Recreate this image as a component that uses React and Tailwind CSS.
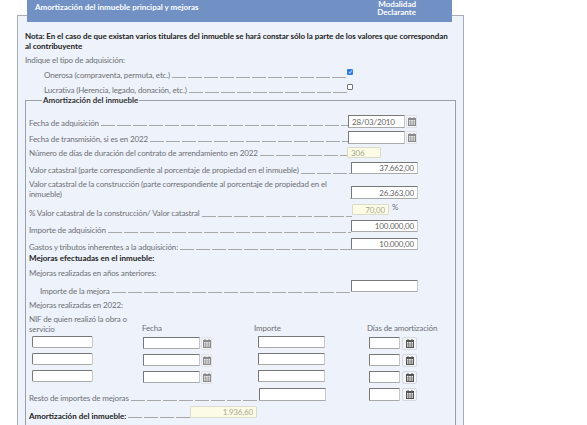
function Cal({ dark, boxed }) {
  const c = dark ? "#555" : "#8a8a8a";
  return (
    <span className={boxed ? "flex h-[13px] w-[15px] shrink-0 items-center justify-center rounded-[2px] border border-[#d5d8de] bg-[#f2f4f8]" : "flex h-[13px] w-[11px] shrink-0 items-center justify-center rounded-[1px] border border-[#dfe2e8] bg-[#f2f4f8]"}>
      <svg width="8" height="9" viewBox="0 0 8 9">
        <rect x="0.5" y="1.5" width="7" height="7" fill="#e8e8e8" stroke={c} />
        <rect x="0" y="1" width="8" height="2" fill={c} />
        <path d="M2 0v2M6 0v2" stroke={c} />
        <path d="M0 5h8M0 7h8M2.7 3v6M5.3 3v6" stroke={c} strokeWidth="0.6" />
      </svg>
    </span>
  );
}

function Field({ className, value, readOnly }) {
  return (
    <input
      readOnly
      value={value || ""}
      className={
        "relative z-[1] box-border block rounded-[1px] border px-[3px] text-right text-[8px] leading-none outline-none " +
        (readOnly
          ? "border-[#d9dcc8] bg-[#fbfbe6] text-[#a8a890] "
          : "border-t-[#777] border-l-[#777] border-r-[#c4c7cc] border-b-[#aaa] bg-white text-[#666] ") +
        className
      }
    />
  );
}

const Leader = ({ className, mb }) => (
  <span className={"ml-[2px] h-px min-w-0 bg-[repeating-linear-gradient(90deg,#a8a8a8_0_14px,transparent_14px_16px)] " + (mb || "mb-[2px]") + " " + (className || "flex-1")} />
);

function Row({ h, label, indent, right, labelMb, leaderMb }) {
  return (
    <div className={"flex items-end " + h}>
      <span className={(indent || "") + " shrink-0 whitespace-nowrap " + (labelMb || "")}>{label}</span>
      <Leader mb={leaderMb} />
      {right}
    </div>
  );
}

function DateBox({ value }) {
  return (
    <div className="mr-[1px] flex w-[69px] items-center gap-[1px]">
      <Field value={value} className="h-[13px] w-[57px] !text-left" />
      <Cal />
    </div>
  );
}

const Amount = ({ value }) => <Field value={value} className="h-[12px] w-[67px]" />;

export default function App() {
  return (
    <div className="h-[425px] w-[587px] overflow-hidden bg-white text-[8px] leading-[10px] tracking-[-0.15px] text-[#6d7075] [font-family:'Lato','Liberation_Sans',sans-serif]">
      <div className="w-[447px] pl-[17px]">
        <div className="relative z-10 ml-[10px] flex h-[22px] w-[425px] items-start justify-between bg-[#7190c4] pl-[8px] pr-[36px] text-[8px] font-bold tracking-normal text-white">
          <span className="pt-[2px]">Amortización del inmueble principal y mejoras</span>
          <span className="flex flex-col items-end leading-[8px]">
            <span>Modalidad</span>
            <span>Declarante</span>
          </span>
        </div>
        <div className="-mt-[7px] box-border h-[420px] w-[447px] border border-[#a8adb5] bg-[#eef2fa] pl-[7px] pr-[7px]">
          <p className="mt-[15px] text-[8px] font-bold tracking-[-0.05px] text-[#222]">
            Nota: En el caso de que existan varios titulares del inmueble se hará constar sólo la parte de los valores que correspondan<br />al contribuyente
          </p>
          <p className="mt-[4px]">Indique el tipo de adquisición:</p>
          <div className="mr-[103px] flex h-[15px] items-end pl-[19px]">
            <span className="shrink-0">Onerosa (compraventa, permuta, etc.)</span>
            <Leader />
            <span className="mb-[2px] flex h-[6px] w-[6px] items-center justify-center self-center rounded-[1px] bg-[#2f7de1] text-[6px] leading-none text-white">✓</span>
          </div>
          <div className="mr-[103px] flex h-[15px] items-end pl-[19px]">
            <span className="shrink-0">Lucrativa (Herencia, legado, donación, etc.)</span>
            <Leader />
            <span className="mb-[2px] h-[6px] w-[6px] self-center rounded-[1px] border border-[#777] bg-white" />
          </div>
          <fieldset className="min-w-0 border border-[#9aa0a8] pb-[12px] pl-[3px] pr-[37px]">
            <legend className="ml-[13px] px-[1px] text-[8px] font-bold leading-[10px] tracking-normal text-[#333]">Amortización del inmueble</legend>
            <Row h="h-[23px]" label="Fecha de adquisición" right={<DateBox value="28/03/2010" />} />
            <Row h="h-[16px]" label="Fecha de transmisión, si es en 2022" right={<DateBox />} />
            <Row h="h-[14px]" label="Número de días de duración del contrato de arrendamiento en 2022" right={<><Field readOnly value="306" className="h-[11px] w-[34px] !text-left" /><span className="w-[37px]" /></>} />
            <Row h="h-[16px]" labelMb="-mb-[1px]" leaderMb="mb-0" label="Valor catastral (parte correspondiente al porcentaje de propiedad en el inmueble)" right={<Amount value="37.662,00" />} />
            <div className="flex h-[25px] items-end">
              <span className="w-[319px] shrink-0">Valor catastral de la construcción (parte correspondiente al porcentaje de propiedad en el inmueble)</span>
              <Leader mb="mb-0" />
              <Field value="26.363,00" className="h-[13px] w-[67px]" />
            </div>
            <Row h="h-[16px]" labelMb="-mb-[3px]" leaderMb="-mb-[2px]" label="% Valor catastral de la construcción/ Valor catastral" right={<><Field readOnly value="70,00" className="h-[11px] w-[37px]" /><span className="w-[29px] self-start pl-[3px] pt-[3px]">%</span></>} />
            <Row h="h-[17px]" labelMb="-mb-[3px]" leaderMb="-mb-[1px]" label="Importe de adquisición" right={<Amount value="100.000,00" />} />
            <Row h="h-[18px]" labelMb="-mb-[2px]" leaderMb="mb-0" label="Gastos y tributos inherentes a la adquisición:" right={<Amount value="10.000,00" />} />
            <p className="mt-[3px] text-[8px] font-bold tracking-normal text-[#222]">Mejoras efectuadas en el inmueble:</p>
            <p className="mt-[5px]">Mejoras realizadas en años anteriores:</p>
            <Row h="h-[14px]" indent="pl-[11px]" labelMb="-mb-[4px]" leaderMb="-mb-[1px]" label="Importe de la mejora" right={<Amount />} />
            <p className="mt-[8px]">Mejoras realizadas en 2022:</p>
            <div className="mt-[4px] grid grid-cols-[113px_112px_113px_64px]">
              <div className="h-[19px] pr-[13px]">NIF de quien realizó la obra o servicio</div>
              <div className="self-end">Fecha</div>
              <div className="self-end">Importe</div>
              <div className="self-end whitespace-nowrap">Días de amortización</div>
              {[0, 1, 2].map((i) => (
                <div key={i} className="contents">
                  <div className="mt-[3px] h-[14px] pl-[3px]"><Field className="h-[12px] w-[61px] rounded-[2px]" /></div>
                  <div className="mt-[3px] flex h-[14px] items-center gap-[1px] pl-[1px]"><Field className="h-[12px] w-[57px]" /><Cal /></div>
                  <div className="mt-[3px] h-[14px] pl-[4px]"><Field className="h-[12px] w-[67px]" /></div>
                  <div className="mt-[3px] flex h-[14px] items-center gap-[2px] pl-[2px]"><Field className="h-[12px] w-[31px]" /><Cal dark boxed /></div>
                </div>
              ))}
            </div>
            <div className="flex h-[17px] items-end">
              <span className="-mb-[2px] shrink-0">Resto de importes de mejoras</span>
              <Leader mb="mb-0" />
              <Field className="h-[13px] w-[67px]" />
              <span className="ml-[43px] mr-[1px] flex items-center gap-[2px]"><Field className="h-[13px] w-[31px]" /><Cal dark boxed /></span>
            </div>
            <div className="flex h-[17px] items-end">
              <span className="-mb-[3px] w-[97px] shrink-0 whitespace-nowrap text-[8px] font-bold tracking-normal text-[#222]">Amortización del inmueble:</span>
              <Leader mb="mb-0" className="w-[62px]" />
              <Field readOnly value="1.936,60" className="h-[12px] w-[67px]" />
            </div>
          </fieldset>
        </div>
      </div>
    </div>
  );
}
